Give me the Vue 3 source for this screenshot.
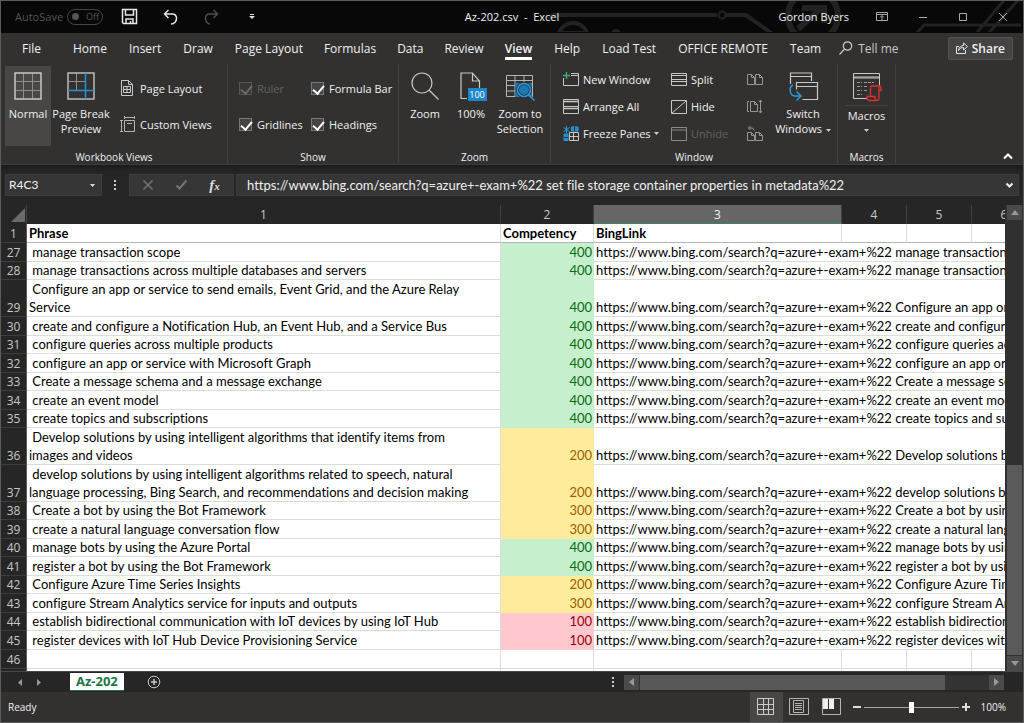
<script setup>
import { ref } from 'vue'

const tabs = ['File', 'Home', 'Insert', 'Draw', 'Page Layout', 'Formulas', 'Data', 'Review', 'View', 'Help', 'Load Test', 'OFFICE REMOTE', 'Team']
const activeTab = ref('View')

const cell = ref('R4C3')
const formula = ref('https://www.bing.com/search?q=azure+-exam+%22 set file storage container properties in metadata%22')
const zoom = ref(100)

const show = ref([
  { id: 'ruler', label: 'Ruler', on: true, disabled: true },
  { id: 'formula-bar', label: 'Formula Bar', on: true, disabled: false },
  { id: 'gridlines', label: 'Gridlines', on: true, disabled: false },
  { id: 'headings', label: 'Headings', on: true, disabled: false },
])

const link = 'https://www.bing.com/search?q=azure+-exam+%22 '
const rows = [
  [27, 'manage transaction scope', 400],
  [28, 'manage transactions across multiple databases and servers', 400],
  [29, 'Configure an app or service to send emails, Event Grid, and the Azure Relay Service', 400],
  [30, 'create and configure a Notification Hub, an Event Hub, and a Service Bus', 400],
  [31, 'configure queries across multiple products', 400],
  [32, 'configure an app or service with Microsoft Graph', 400],
  [33, 'Create a message schema and a message exchange', 400],
  [34, 'create an event model', 400],
  [35, 'create topics and subscriptions', 400],
  [36, 'Develop solutions by using intelligent algorithms that identify items from images and videos', 200],
  [37, 'develop solutions by using intelligent algorithms related to speech, natural language processing, Bing Search, and recommendations and decision making', 200],
  [38, 'Create a bot by using the Bot Framework', 300],
  [39, 'create a natural language conversation flow', 300],
  [40, 'manage bots by using the Azure Portal', 400],
  [41, 'register a bot by using the Bot Framework', 400],
  [42, 'Configure Azure Time Series Insights', 200],
  [43, 'configure Stream Analytics service for inputs and outputs', 300],
  [44, 'establish bidirectional communication with IoT devices by using IoT Hub', 100],
  [45, 'register devices with IoT Hub Device Provisioning Service', 100],
]
const tallRows = [29, 36, 37]
const shortRows = [28, 31, 33, 35, 38, 40, 42, 44]
const tone = (n) => (n >= 400 ? 'good' : n >= 200 ? 'neutral' : 'bad')
</script>

<template>
  <div class="window">
    <header class="titlebar">
      <svg class="circuit" width="480" height="31" viewBox="0 0 480 31" fill="none" stroke="#222" stroke-width="4" aria-hidden="true">
        <path d="M5 17l5-3h164M183 14h20l28 20" />
        <circle cx="179" cy="14" r="3.500" stroke-width="2" />
        <circle cx="30" cy="37" r="15" />
        <path d="M19 31h22" stroke-width="2" />
        <circle cx="73" cy="33" r="5" fill="#222" stroke="none" />
        <circle cx="270" cy="15" r="25" stroke-width="6" />
        <path d="M255 28l22-20M259 7h22v15" stroke-width="6" />
        <path d="M372 34l9-10h97M432 34l30-36M444 34l32-36" stroke-width="3" />
      </svg>
      <div class="quick">
        <span id="autosave">AutoSave</span>
        <button class="switch" role="switch" aria-checked="false" aria-labelledby="autosave"><i></i><span>Off</span></button>
        <button class="q-save" aria-label="Save">
          <svg width="18" height="18" viewBox="0 0 18 18" fill="none" stroke="#e8e8e8" stroke-width="1.500"><path d="M1.500 1.500h14v14h-13l-1-1zM4.500 1.500v5.500h8v-5.500M5 15.500v-4.500h7v4.500M9.500 13v2.500" /></svg>
        </button>
        <button class="q-undo" aria-label="Undo">
          <svg width="16" height="16" viewBox="0 0 16 16" fill="none" stroke="#e8e8e8" stroke-width="1.500"><path d="M5.500 1L1.500 5l4 4M1.500 5h7.500c3 0 4.500 2 4.500 4.500S11.500 15 8 15" /></svg>
        </button>
        <button class="q-redo" aria-label="Redo" disabled>
          <svg width="16" height="16" viewBox="0 0 16 16" fill="none" stroke="#4d4d4d" stroke-width="1.500"><path d="M9.500 1l4 4-4 4M13.500 5h-7.500c-3 0-4.500 2-4.500 4.500S3.500 15 6 15" /></svg>
        </button>
        <button aria-label="Customize Quick Access Toolbar">
          <svg width="6" height="6" viewBox="0 0 6 6" fill="#ddd"><path d="M1 0h4v1H1zM0 2h6L3 5z" /></svg>
        </button>
      </div>
      <h1>Az-202.csv&nbsp; -&nbsp; Excel</h1>
      <div class="account">
        <span class="user">Gordon Byers</span>
        <button aria-label="Ribbon Display Options"><svg width="12" height="10" viewBox="0 0 12 10" fill="none" stroke="#aaa"><path d="M.5.500h11v8H.5zM.5 2.500h11M6 8V4M4 5.500l2-2 2 2" /></svg></button>
        <button aria-label="Minimize"><svg width="10" height="10" viewBox="0 0 10 10" stroke="#aaa"><path d="M1 5.500h8" /></svg></button>
        <button aria-label="Maximize"><svg width="10" height="10" viewBox="0 0 10 10" fill="none" stroke="#aaa"><path d="M1.500 1.500h7v7h-7z" /></svg></button>
        <button aria-label="Close"><svg width="10" height="10" viewBox="0 0 10 10" stroke="#aaa"><path d="M1 1l8 8M9 1l-8 8" /></svg></button>
      </div>
    </header>

    <nav class="tabs">
      <button v-for="t in tabs" :key="t" :class="{ active: t === activeTab }" @click="activeTab = t">{{ t }}</button>
      <button class="tell">
        <svg width="14" height="14" viewBox="0 0 14 14" fill="none" stroke="#c8c8c8" stroke-width="1.200"><circle cx="8.500" cy="5" r="4.200" /><path d="M5.500 8l-5 5.500" /></svg>
        <span>Tell me</span>
      </button>
      <button class="share">
        <svg width="12" height="12" viewBox="0 0 12 12" fill="none" stroke="#e6e6e6"><path d="M3 4.500H.5v7h9V8M2.500 8.500C3 5 5 3.500 7.500 3.500v-2.500l4 3.500-4 3.500V5.500C5.500 5.500 4 6 2.500 8.500z" /></svg>
        Share
      </button>
    </nav>

    <section class="ribbon" aria-label="View">
      <div class="group g-views">
        <div class="body">
          <button class="big normal">
            <svg width="28" height="28" viewBox="0 0 28 28" fill="none" stroke="#8f8f8f"><path d="M9.500 1v26M18.500 1v26M1 9.500h26M1 18.500h26" /><path d="M1 1h26v26H1z" stroke="#c8c8c8" stroke-width="1.500" /></svg>
            <span>Normal</span>
          </button>
          <button class="big break">
            <svg width="28" height="28" viewBox="0 0 28 28" fill="none" stroke="#8f8f8f"><path d="M9.500 1v18M1 9.500h17" /><path d="M1 1h26v26H1z" stroke="#bbb" stroke-width="1.500" /><path d="M18.500 1v26M1 18.500h26" stroke="#2391d3" stroke-width="1.500" /></svg>
            <span>Page Break<br>Preview</span>
          </button>
          <div class="stack two">
            <button class="small">
              <svg width="16" height="16" viewBox="0 0 16 16" fill="none" stroke="#c8c8c8"><path d="M1.500.500h7l4 4v11h-11zM8.500.500v4h4M3.500 6.500h7v6h-7zM3.500 9.500h7M7 6.500v6" /></svg>
              Page Layout
            </button>
            <button class="small">
              <svg width="16" height="16" viewBox="0 0 16 16" fill="none" stroke="#b4b4b4"><path d="M4.500 4.500h10v11h-10zM4.500 1.500h10M4.500 0v3M14.500 0v3M1.500 4.500v11M0 4.500h3M0 15.500h3M7 7.500h5" /></svg>
              Custom Views
            </button>
          </div>
        </div>
        <h2>Workbook Views</h2>
      </div>

      <div class="group g-show">
        <div class="checks">
          <label v-for="s in show" :key="s.id" :for="s.id" :class="{ off: s.disabled }">
            <input :id="s.id" v-model="s.on" type="checkbox" :disabled="s.disabled">
            {{ s.label }}
          </label>
        </div>
        <h2>Show</h2>
      </div>

      <div class="group g-zoom">
        <div class="body">
          <button class="big">
            <svg width="28" height="28" viewBox="0 0 28 28" fill="none" stroke="#c8c8c8" stroke-width="1.200"><circle cx="11" cy="11" r="10" /><path d="M18 18l9.500 9.500" /></svg>
            <span>Zoom</span>
          </button>
          <button class="big">
            <svg width="28" height="28" viewBox="0 0 28 28" fill="none" stroke="#c8c8c8" stroke-width="1.200"><path d="M10 26.500H4V1h11.500l7 8v7M15.500 1v8h7" /><path d="M11 16h19v13H11z" fill="#1e87cb" stroke="none" /><text x="20" y="26" fill="#fff" stroke="none" font-size="9" text-anchor="middle">100</text></svg>
            <span>100%</span>
          </button>
          <button class="big">
            <svg width="30" height="28" viewBox="0 0 30 28" fill="none" stroke="#b4b4b4"><path d="M1.500 3.500h26v21h-26zM1.500 8.500h26M1.500 13.500h10M1.500 19h10M10 4v20M19 4v7" /><path d="M10 11h17v14H10z" fill="#1e78b4" stroke="none" /><circle cx="19" cy="18" r="6.500" stroke="#2d2d2d" stroke-width="3" /><circle cx="19" cy="18" r="6.500" stroke="#2a9bdf" stroke-width="1.500" /><path d="M23.500 22.500l6 6" stroke="#2a9bdf" stroke-width="1.500" /></svg>
            <span>Zoom to<br>Selection</span>
          </button>
        </div>
        <h2>Zoom</h2>
      </div>

      <div class="group g-window">
        <div class="body">
          <div class="stack three first">
            <button class="small">
              <svg width="16" height="16" viewBox="0 0 16 16" fill="none" stroke="#c8c8c8"><path d="M8 1.500h7.500v12H.5V6M8 3.500h7.500" /><path d="M3.500 0v7M0 3.500h7" stroke="#3bb36c" stroke-width="1.300" /></svg>
              New Window
            </button>
            <button class="small">
              <svg width="16" height="16" viewBox="0 0 16 16" fill="none" stroke="#c8c8c8"><path d="M.5.500h15v7H.5zM.5 7.500h15v7H.5z" /><path d="M1 2.500h14M1 9.500h14" stroke-width="1.500" /></svg>
              Arrange All
            </button>
            <button class="small">
              <svg width="16" height="16" viewBox="0 0 16 16" fill="none" stroke="#2a9bdf"><path d="M8.500 1h6.500v4H8.500zM1 8h4v6.500H1z" fill="#1e87cb" /><path d="M11.500 1v4M1 11.500h4" stroke="#323130" /><path d="M3.500 0v7M.5 1.500l6 4M6.500 1.500l-6 4" /><path d="M6.500 6.500h9v8h-9zM6.500 10.500h9M10.500 6.500v8" stroke="#c8c8c8" /></svg>
              Freeze Panes
              <svg class="caret" width="5" height="3" viewBox="0 0 5 3" fill="#ccc"><path d="M0 0h5L2.500 3z" /></svg>
            </button>
          </div>
          <div class="stack three second">
            <button class="small">
              <svg width="16" height="16" viewBox="0 0 16 16" fill="none" stroke="#c8c8c8"><path d="M.5 1.500h15v12H.5zM.5 3.500h15M.5 7.500h15M.5 9.500h15" /></svg>
              Split
            </button>
            <button class="small">
              <svg width="16" height="16" viewBox="0 0 16 16" fill="none" stroke="#c8c8c8"><path d="M.5 1.500h15v13H.5zM1 14L15 2" /></svg>
              Hide
            </button>
            <button class="small" disabled>
              <svg width="16" height="16" viewBox="0 0 16 16" fill="none" stroke="#8a8a8a"><path d="M.5 1.500h15v13H.5zM.5 4h15" /></svg>
              Unhide
            </button>
          </div>
          <div class="stack three third">
            <button class="small" aria-label="View Side by Side">
              <svg width="16" height="16" viewBox="0 0 16 16" fill="none" stroke="#969696"><path d="M.5 2.500h4l3 3v7h-7zM4.500 2.500v3h3M8.500 2.500h4l3 3v7h-7zM12.500 2.500v3h3" /></svg>
            </button>
            <button class="small" aria-label="Synchronous Scrolling">
              <svg width="16" height="16" viewBox="0 0 16 16" fill="none" stroke="#969696"><path d="M2 2.500H.5v10H2M3.500 2.500h4l3 3v7h-7zM7.500 2.500v3h3M13.500 1v13M12 3l1.500-2L15 3M12 12l1.500 2 1.500-2" /></svg>
            </button>
            <button class="small" aria-label="Reset Window Position">
              <svg width="16" height="16" viewBox="0 0 16 16" fill="none" stroke="#969696"><path d="M.5 6.500h4l3 3v5h-7zM4.500 6.500v3h3M8.500 6.500h4l3 3v5h-7zM12.500 6.500v3h3M3.500 0l-2 2 2 2M1.500 2h4l2 2.500" /></svg>
            </button>
          </div>
          <button class="big switchwin">
            <svg width="30" height="28" viewBox="0 0 30 28" fill="none" stroke="#c8c8c8" stroke-width="1.200"><path d="M2.500 8V1h21v8M2.500 4.500h21M2.500 8v4M8.500 11.500v-1h21v17h-15M8.500 14.500h21M8.500 10.500v7" /><path d="M5 13c-4 1.500-4 10 1.500 11h6M8.500 19.500l4.500 4.500-4.500 4.500" stroke="#2a9bdf" stroke-width="1.500" /></svg>
            <span>Switch<br>Windows <svg class="caret" width="5" height="3" viewBox="0 0 5 3" fill="#ccc"><path d="M0 0h5L2.500 3z" /></svg></span>
          </button>
        </div>
        <h2>Window</h2>
      </div>

      <div class="group g-macros">
        <div class="body">
          <button class="big macros">
            <svg width="30" height="28" viewBox="0 0 30 28" fill="none" stroke="#c8c8c8"><path d="M15 26.500H1.500v-25h26v12M1.500 5h26M1.500 6h26" /><path d="M5 10.500h5M12 10.500h10M5 14.500h5M12 14.500h4M5 18.500h5M12 18.500h4M5 22.500h5" stroke="#999" stroke-dasharray="3 1" /><path d="M18.500 24.500V15.500q0-1.500 1.500-1.500h7.500q1.500 0 1.500 1.500v3h-2.500M27 15v11q0 2.500-2 2.500h-7.500q-2.500 0-2.500-2.500v-1.500h8v2q0 1.500 1.500 1.500" stroke="#e02f33" stroke-width="1.300" /></svg>
            <hr>
            <span>Macros</span>
            <svg class="drop" width="5" height="3" viewBox="0 0 5 3" fill="#ccc"><path d="M0 0h5L2.500 3z" /></svg>
          </button>
        </div>
        <h2>Macros</h2>
      </div>
      <button class="collapse" aria-label="Collapse the Ribbon">
        <svg width="10" height="7" viewBox="0 0 10 7" fill="none" stroke="#fff" stroke-width="2"><path d="M1 5.500l4-4 4 4" /></svg>
      </button>
    </section>

    <section class="formulabar">
      <div class="namebox">
        <input v-model="cell" aria-label="Name Box">
        <button aria-label="Name list"><svg width="5" height="3" viewBox="0 0 5 3" fill="#ddd"><path d="M0 0h5L2.500 3z" /></svg></button>
      </div>
      <svg class="grip" width="2" height="11" viewBox="0 0 2 11" fill="#ccc"><path d="M0 0h2v2H0zM0 4h2v2H0zM0 8h2v2H0z" /></svg>
      <div class="fx">
        <button aria-label="Cancel"><svg width="10" height="10" viewBox="0 0 10 10" stroke="#747474" stroke-width="1.500"><path d="M.5.500l9 9M9.500.500l-9 9" /></svg></button>
        <button aria-label="Enter"><svg width="11" height="10" viewBox="0 0 11 10" fill="none" stroke="#747474" stroke-width="2"><path d="M.5 5.500l3 3L10.500.500" /></svg></button>
        <button class="fn" aria-label="Insert Function">f<small>x</small></button>
      </div>
      <div class="entry">
        <input v-model="formula" aria-label="Formula">
        <button aria-label="Expand Formula Bar"><svg width="7" height="5" viewBox="0 0 7 5" fill="none" stroke="#eee" stroke-width="2"><path d="M.5.500l3 3 3-3" /></svg></button>
      </div>
    </section>

    <main class="sheet">
      <div class="viewport">
        <table>
          <colgroup><col class="c0"><col class="c1"><col class="c2"><col class="c3"><col class="c4"><col class="c4"><col class="c4"></colgroup>
          <thead>
            <tr>
              <th class="corner" aria-label="Select all"><svg width="14" height="14" viewBox="0 0 14 14" fill="#6b6b6b"><path d="M14 0v14H0z" /></svg></th>
              <th>1</th><th>2</th><th class="selected">3</th><th>4</th><th>5</th><th>6</th>
            </tr>
          </thead>
          <tbody>
            <tr class="frozen"><th>1</th><td>Phrase</td><td>Competency</td><td>BingLink</td><td></td><td></td><td></td></tr>
            <tr v-for="[n, phrase, score] in rows" :key="n" :class="{ short: shortRows.includes(n), tall: tallRows.includes(n) }">
              <th>{{ n }}</th>
              <td class="phrase">&nbsp;{{ phrase }}</td>
              <td class="score" :class="tone(score)">{{ score }}</td>
              <td class="link" colspan="4">{{ link + phrase }}</td>
            </tr>
            <tr><th>46</th><td></td><td></td><td></td><td></td><td></td><td></td></tr>
            <tr><th></th><td></td><td></td><td></td><td></td><td></td><td></td></tr>
          </tbody>
        </table>
      </div>
      <div class="vscroll">
        <button aria-label="Scroll up"><svg width="8" height="5" viewBox="0 0 8 5" fill="#999"><path d="M0 5h8L4 0z" /></svg></button>
        <div class="vthumb"></div>
        <button aria-label="Scroll down"><svg width="8" height="5" viewBox="0 0 8 5" fill="#999"><path d="M0 0h8L4 5z" /></svg></button>
      </div>
    </main>

    <section class="sheettabs">
      <button class="arrow" aria-label="Previous sheet"><svg width="4" height="7" viewBox="0 0 4 7" fill="#999"><path d="M4 0v7L0 3.500z" /></svg></button>
      <button class="arrow" aria-label="Next sheet"><svg width="4" height="7" viewBox="0 0 4 7" fill="#999"><path d="M0 0v7l4-3.500z" /></svg></button>
      <button class="sheettab">Az-202</button>
      <button class="add" aria-label="New sheet"><svg width="14" height="14" viewBox="0 0 14 14" fill="none" stroke="#c8c8c8"><circle cx="7" cy="7" r="5.800" /><path d="M7 4v6M4 7h6" stroke-width="1.500" /></svg></button>
      <svg class="grip" width="2" height="11" viewBox="0 0 2 11" fill="#ccc"><path d="M0 0h2v2H0zM0 4h2v2H0zM0 8h2v2H0z" /></svg>
      <div class="hscroll">
        <button aria-label="Scroll left"><svg width="5" height="8" viewBox="0 0 5 8" fill="#999"><path d="M5 0v8L0 4z" /></svg></button>
        <div class="hthumb"></div>
        <button aria-label="Scroll right"><svg width="5" height="8" viewBox="0 0 5 8" fill="#999"><path d="M0 0v8l5-4z" /></svg></button>
      </div>
    </section>

    <footer class="status">
      <span class="ready">Ready</span>
      <button class="on" aria-label="Normal"><svg width="18" height="18" viewBox="0 0 18 18" fill="none" stroke="#ccc"><path d="M.5.500h16v16H.5zM6.500.500v16M11.500.500v16M.5 6.500h16M.5 11.500h16" /></svg></button>
      <button aria-label="Page Layout"><svg width="20" height="18" viewBox="0 0 20 18" fill="none" stroke="#b4b4b4"><path d="M.5.500h19v16H.5zM4.500 2.500h10v12h-10zM6 5.500h7M6 7.500h7M6 9.500h7M6 11.500h7" /></svg></button>
      <button aria-label="Page Break Preview"><svg width="20" height="18" viewBox="0 0 20 18" fill="none" stroke="#b4b4b4"><path d="M.5.500h18v16H.5z" /><path d="M1 1h5v10H1zM7 1h5v10H7z" fill="#eee" stroke="none" /></svg></button>
      <button class="step" aria-label="Zoom out"><svg width="8" height="8" viewBox="0 0 8 8" stroke="#ddd" stroke-width="2"><path d="M0 4h8" /></svg></button>
      <input v-model="zoom" class="slider" type="range" min="0" max="200" aria-label="Zoom level">
      <button class="step" aria-label="Zoom in"><svg width="8" height="8" viewBox="0 0 8 8" stroke="#ddd" stroke-width="2"><path d="M0 4h8M4 0v8" /></svg></button>
      <span class="percent">{{ zoom }}%</span>
    </footer>
  </div>
</template>

<style>
body { margin: 0; background: #262626; }
</style>

<style scoped>
* { box-sizing: border-box; }
.window {
  display: flex; flex-direction: column; height: 100vh; overflow: hidden;
  border: 1px solid #5c5c5c; background: #262626; color: #f0f0f0;
  font: 11px/15px "Open Sans", "Noto Sans", sans-serif;
}
button, input { font: inherit; color: inherit; background: none; border: 0; padding: 0; margin: 0; }
h1, h2 { margin: 0; font: inherit; }
svg { display: block; flex: none; overflow: visible; }

.titlebar {
  position: relative; display: grid; grid-template-columns: 1fr auto 1fr; align-items: center;
  height: 32px; flex: none; padding-bottom: 1px; background: #080808;
}
.circuit { position: absolute; right: 0; top: 0; overflow: hidden; }
.quick, .account { position: relative; display: flex; align-items: center; }
h1 { position: relative; font-size: 11px; }
.quick { padding-left: 14px; color: #555; }
.switch { display: flex; align-items: center; gap: 7px; width: 36px; height: 16px; margin-left: 4px; padding-left: 4px; border: 1px solid #444; border-radius: 8px; font-size: 9px; line-height: 14px; }
.switch i { width: 7px; height: 7px; border-radius: 50%; background: #555; }
.q-save { margin-left: 18px; }
.q-undo { margin-left: 24px; }
.q-redo { margin: 0 29px 0 25px; }
.account { justify-content: flex-end; padding-right: 15px; }
.account button { margin-left: 30px; }
.account .user + button { margin-left: 27px; }

.tabs { display: flex; align-items: stretch; flex: none; height: 30px; padding-left: 21px; background: #323130; font-size: 12px; }
.tabs button { position: relative; margin-right: 22px; white-space: nowrap; }
.tabs button:nth-child(n+5):nth-child(-n+8) { margin-right: 21px; }
.tabs button:first-child { margin-right: 32px; }
.tabs .active { font-weight: 600; }
.tabs .active::after { content: ""; position: absolute; left: 0; right: 0; bottom: 3px; height: 3px; background: #fff; }
.tabs button.tell { display: flex; align-items: center; gap: 5px; margin: 0 auto 0 -4px; color: #c8c8c8; }
.tabs button.share { display: flex; align-items: center; align-self: center; gap: 4px; height: 23px; padding: 0 7px; margin-right: 10px; border: 1px solid #555; border-radius: 2px; background: #444; font-weight: 600; }

.ribbon { display: flex; flex: none; height: 102px; background: #323130; border-bottom: 1px solid #3c3c3c; }
.group { display: flex; flex-direction: column; justify-content: space-between; border-right: 1px solid #424140; margin: 1px 0; }
.group h2 { text-align: center; line-height: 12px; font-size: 10px; }
.body { display: flex; height: 80px; margin-top: 2px; }
.big { display: flex; flex-direction: column; align-items: center; width: 46px; padding-top: 6px; white-space: nowrap; }
.big > span { margin-top: 6px; }
.normal { background: #484745; }
.break { width: 60px; }
.stack { display: grid; align-content: start; }
.stack.two { grid-auto-rows: 36px; padding: 4px 0 0 9px; }
.stack.three { grid-auto-rows: 27px; }
.small { display: flex; align-items: center; gap: 4px; white-space: nowrap; }
.small:disabled, .off { color: #636261; }
.caret { display: inline-block; margin-left: 1px; vertical-align: middle; }
.small .caret { margin-left: -1px; }
.g-views { width: 227px; }
.g-views .body { padding-left: 4px; }
.g-show { width: 171px; }
.checks { display: grid; grid-template-columns: 72px 1fr; grid-auto-rows: 36px; padding: 6px 0 0 11px; }
.checks label { display: flex; align-items: center; gap: 5px; white-space: nowrap; }
.checks input { appearance: none; position: relative; width: 13px; height: 13px; border: 1px solid #797775; background: #444; }
.checks input:checked::after { content: ""; position: absolute; left: 3px; top: 0; width: 5px; height: 9px; border: solid #fff; border-width: 0 2px 2px 0; transform: rotate(40deg); }
.checks .off input { border-color: #555; background: #383736; }
.checks .off input:checked::after { border-color: #6b6b6b; }
.g-zoom { width: 152px; }
.g-zoom .body { padding-left: 3px; }
.g-zoom .big:last-child { width: 52px; }
.g-window { width: 287px; }
.g-window .body { padding-left: 12px; }
.first { width: 108px; }
.second { width: 76px; }
.third { width: 26px; }
.switchwin { width: 60px; }
.g-macros { width: 58px; }
.g-macros .body { justify-content: center; }
.macros hr { width: 42px; height: 1px; margin: 5px 0 0; border: 0; background: #454443; }
.macros > span { margin-top: 2px; }
.drop { margin-top: 6px; }
.collapse { margin: auto 10px 4px auto; }

.formulabar { display: flex; align-items: center; flex: none; height: 40px; padding: 0 4px; background: linear-gradient(#1b1b1b, #262626 7px); font: 13px/18px Lato, "Open Sans", sans-serif; font-variant-ligatures: none; }
.formulabar input { font-variant-ligatures: none; }
.namebox, .fx, .entry { display: flex; align-items: center; height: 22px; background: #363636; border: 1px solid #3c3c3c; }
.namebox { width: 97px; padding: 0 6px 0 3px; justify-content: space-between; font-size: 12px; }
.namebox input { width: 70px; }
.formulabar .grip { margin: 0 13px 0 12px; }
.fx { width: 105px; justify-content: space-around; padding: 0 2px; }
.fn { font: italic bold 15px/18px "Liberation Serif", serif; color: #ddd; }
.fn small { font-size: 11px; }
.entry { flex: 1; margin-left: 2px; padding: 0 5px 0 10px; }
.entry input { flex: 1; min-width: 0; }

.sheet { display: flex; flex: 1; min-height: 0; }
.viewport { flex: 1; min-width: 0; overflow: hidden; background: #fff; color: #000; font: 13px/18px Lato, "Open Sans", sans-serif; font-variant-ligatures: none; }
table { table-layout: fixed; width: 1036px; border-collapse: separate; border-spacing: 0; }
.c0 { width: 26px; }
.c1 { width: 474px; }
.c2 { width: 93px; }
.c3 { width: 248px; }
.c4 { width: 65px; }
th { padding: 0; font-weight: 400; font-size: 12px; font-family: "Open Sans", sans-serif; color: #c8c8c8; background: #262626; vertical-align: bottom; }
thead th { height: 19px; line-height: 17px; border-right: 1px solid #404040; border-bottom: 1px solid #262626; }
thead .selected { background: #666; color: #f0f0f0; border-bottom-color: #3a8560; }
.corner svg { margin: 0 1px 1px auto; }
tbody tr { height: 19px; }
tbody tr.short { height: 18px; }
tbody tr.tall { height: 37px; }
tbody th { border-bottom: 1px solid #3d3d3d; border-right: 1px solid #5c5c5c; line-height: 16px; }
td { padding: 0 2px; line-height: 17px; vertical-align: bottom; border-bottom: 1px solid #dcdcdc; border-right: 1px solid #dcdcdc; }
td.phrase { padding-right: 14px; }
tr.tall td.phrase { line-height: 18px; }
.frozen td { font-weight: 700; border-bottom-color: #b4b4b4; }
td.link { white-space: nowrap; }
td.score { text-align: right; padding-right: 1px; border-color: transparent; }
.good { background: #c6efce; color: #0b6b11; }
.neutral { background: #ffeb9c; color: #9c5f00; }
.bad { background: #ffc7ce; color: #9c0006; }

.vscroll { display: flex; flex-direction: column; width: 18px; padding: 0 1px 0 2px; background: #303030; }
.vscroll button, .hscroll button { display: grid; place-items: center; flex: none; width: 15px; height: 15px; background: #4a4a4a; }
.vthumb { margin-top: auto; height: 41%; background: #5a5a5a; border-bottom: 1px solid #303030; }

.sheettabs { display: flex; align-items: center; flex: none; height: 21px; padding: 0 19px 0 17px; border-top: 1px solid #484848; background: #262626; }
.arrow { margin-right: 15px; }
.sheettab { height: 18px; margin: 0 23px 1px 14px; padding: 0 6px; background: #fff; border-bottom: 1px solid #217346; color: #217346; font-weight: 700; font-size: 13px; line-height: 17px; }
.sheettabs .grip { margin: 0 10px 0 auto; }
.hscroll { display: flex; width: 380px; background: #333; }
.hthumb { width: 305px; margin: 0 auto 0 1px; background: #585858; }

.status { display: flex; align-items: center; flex: none; height: 30px; padding: 0 17px 0 7px; background: #323130; font-size: 10px; }
.ready { margin-right: auto; }
.status button { display: grid; place-items: center; width: 33px; height: 30px; }
.status .on { background: #484745; }
.status .step { width: 8px; margin: 0 0 0 4px; }
.slider { appearance: none; width: 95px; height: 12px; margin-left: 3px; background: linear-gradient(#a6a6a6, #a6a6a6) center / 100% 1px no-repeat; }
.slider::-webkit-slider-thumb { appearance: none; width: 5px; height: 11px; background: #fff; }
.status .slider + .step { margin: 0 11px 0 3px; }
</style>
